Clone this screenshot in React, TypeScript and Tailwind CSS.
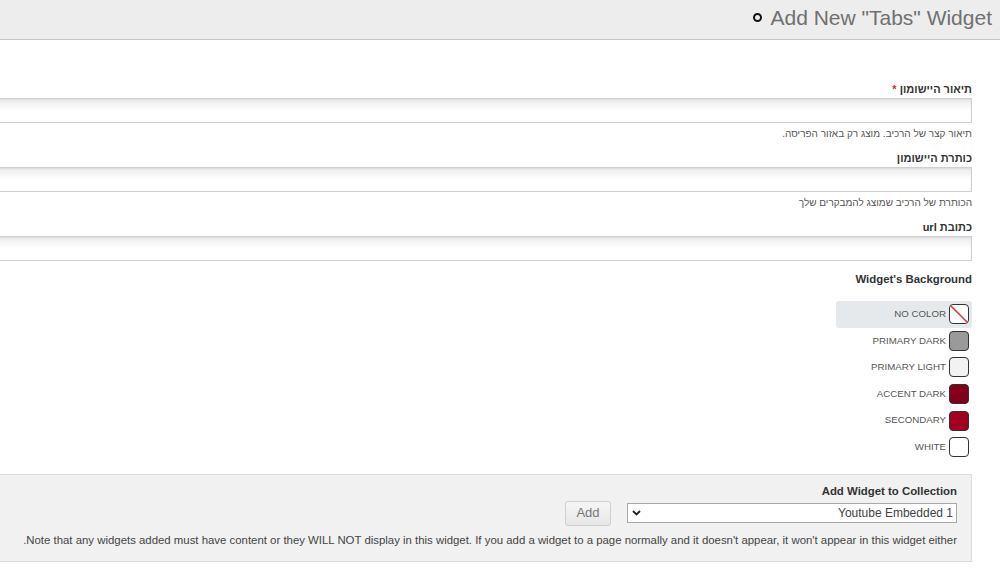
import React from "react";

const colors = [
  { label: "NO COLOR", swatch: "none", selected: true },
  { label: "PRIMARY DARK", swatch: "#9a9a9a" },
  { label: "PRIMARY LIGHT", swatch: "#f2f2f2" },
  { label: "ACCENT DARK", swatch: "#84001a" },
  { label: "SECONDARY", swatch: "#a3001f" },
  { label: "WHITE", swatch: "#ffffff" },
];

const Field = ({ label, required, help }: { label: string; required?: boolean; help?: string }) => (
  <div>
    <div className="h-4 text-[11px] leading-4 font-bold text-[#333]">
      {label}
      {required && <span className="text-[#d9262b]"> *</span>}
    </div>
    <div className="mt-[1px] h-[25px] border border-[#cfcfcf] bg-gradient-to-b from-[#ececec] via-white to-white shadow-[inset_0_1px_2px_rgba(0,0,0,0.08)]" />
    {help && <div className="mt-[4px] h-[14px] text-[10px] leading-[14px] text-[#555]">{help}</div>}
  </div>
);

export default function App() {
  return (
    <div className="w-[1000px] h-[570px] bg-white overflow-hidden font-['Liberation_Sans',Arial,sans-serif]">
      {/* Header */}
      <div className="h-10 bg-[#ededed] border-b border-[#c6c6c6] flex items-center justify-end pr-2 pb-[5px]">
        <div className="w-[9px] h-[9px] rounded-full border-2 border-[#111] mr-[8px] mt-[1px]" />
        <h1 className="text-[21px] leading-none text-[#707070]">Add New "Tabs" Widget</h1>
      </div>

      <div dir="rtl" className="pr-7 -ml-3">
        <div className="pt-[41px]">
          <Field label="תיאור היישומון" required help="תיאור קצר של הרכיב. מוצג רק באזור הפריסה." />
          <div className="mt-[9px]">
            <Field label="כותרת היישומון" help="הכותרת של הרכיב שמוצג להמבקרים שלך" />
          </div>
          <div className="mt-[9px]">
            <Field label="כתובת url" />
          </div>

          <div className="mt-[10px] h-4 text-[11.4px] leading-4 font-bold text-[#333]">Widget's Background</div>

          <div className="mt-[14px] flex flex-col">
            {colors.map((c) => (
              <div
                key={c.label}
                className={`w-[136px] h-[26.6px] flex items-center gap-[3px] pr-[3px] rounded-[3px] ${c.selected ? "bg-[#e6e9eb]" : ""}`}
              >
                <div
                  className="relative w-[20px] h-[20px] rounded-[4px] border border-[#333] overflow-hidden"
                  style={{ background: c.swatch === "none" ? "#fff" : c.swatch }}
                >
                  {c.swatch === "none" && (
                    <svg className="absolute inset-0" width="18" height="18" viewBox="0 0 18 18">
                      <line x1="1" y1="1" x2="17" y2="17" stroke="#e3262e" strokeWidth="1.4" />
                    </svg>
                  )}
                </div>
                <span className="text-[9.7px] text-[#555]">{c.label}</span>
              </div>
            ))}
          </div>
        </div>

        {/* Add to collection panel */}
        <div className="mt-[13px] h-[88px] bg-[#f1f1f1] border border-[#dcdcdc] pr-[14px] pt-[8px]">
          <div className="h-4 text-[11.4px] leading-4 font-bold text-[#333]">Add Widget to Collection</div>
          <div className="mt-[2px] flex items-center gap-4">
            <div className="w-[330px] h-[20px] bg-white border border-[#a9a9a9] flex items-center justify-between pr-[3px] pl-[4px]">
              <span className="text-[12px] text-[#444]">Youtube Embedded 1</span>
              <svg width="9" height="6" viewBox="0 0 9 6">
                <path d="M1 1 L4.5 4.5 L8 1" stroke="#222" strokeWidth="1.8" fill="none" />
              </svg>
            </div>
            <button className="w-[46px] h-[25px] rounded-[3px] border border-[#cfcfcf] bg-gradient-to-b from-[#f6f6f6] to-[#e6e6e6] text-[13px] text-[#777]">
              Add
            </button>
          </div>
          <div className="mt-[7px] text-[11.4px] leading-[14px] text-[#444]">
            Note that any widgets added must have content or they WILL NOT display in this widget. If you add a widget to a page normally and it doesn't appear, it won't appear in this widget either.
          </div>
        </div>
      </div>
    </div>
  );
}
